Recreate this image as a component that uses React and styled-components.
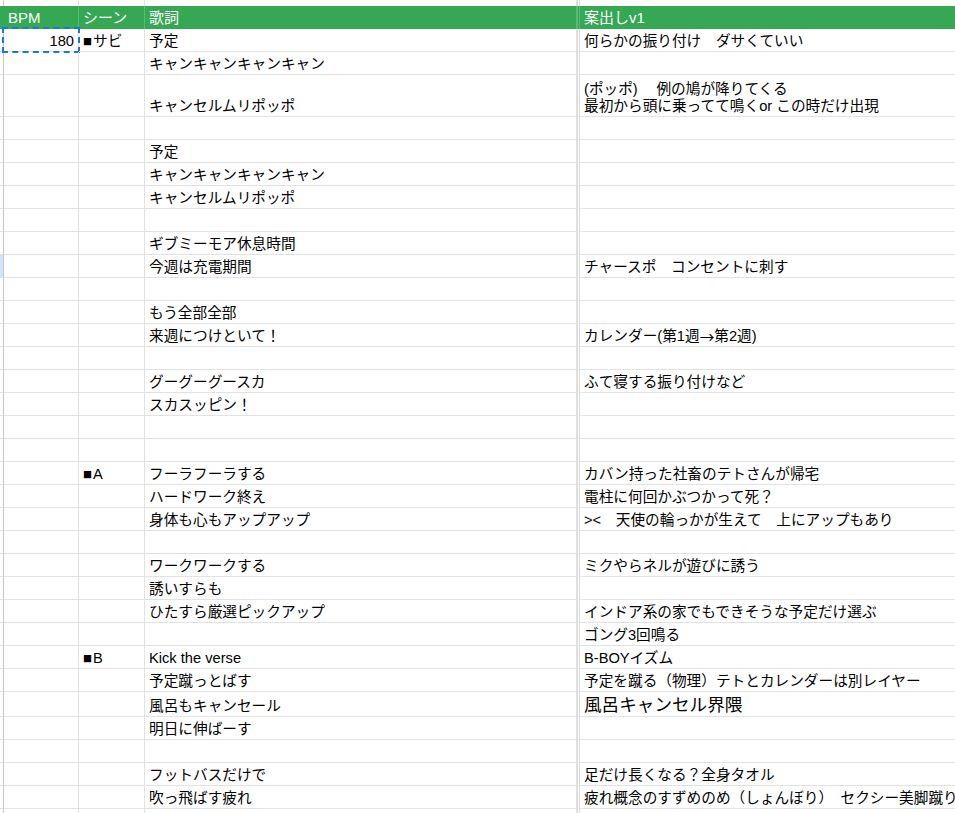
import styled, { createGlobalStyle } from "styled-components";

const GlobalStyle = createGlobalStyle`
  html, body {
    margin: 0;
    padding: 0;
    background: #fff;
    overflow: hidden;
  }
  body {
    font-family: "Liberation Sans", "Noto Sans CJK JP", sans-serif;
    font-size: 14.67px;
    color: #000;
  }
`;

const Cjk = styled.span`
  font-family: "Noto Sans CJK JP", sans-serif;
`;

const rows = [
  { a: "180", b: "サビ", c: "予定", d: "何らかの振り付け　ダサくていい", sel: true },
  { c: "キャンキャンキャンキャン" },
  { c: "キャンセルムリポッポ", d: "(ポッポ)　 例の鳩が降りてくる\n最初から頭に乗ってて鳴くor この時だけ出現", h: 42 },
  {},
  { c: "予定" },
  { c: "キャンキャンキャンキャン" },
  { c: "キャンセルムリポッポ" },
  {},
  { c: "ギブミーモア休息時間" },
  { c: "今週は充電期間", d: "チャースポ　コンセントに刺す", active: true },
  {},
  { c: "もう全部全部" },
  {
    c: "来週につけといて！",
    d: (
      <>
        カレンダー(第1週<Cjk>→</Cjk>第2週)
      </>
    ),
  },
  {},
  { c: "グーグーグースカ", d: "ふて寝する振り付けなど" },
  { c: "スカスッピン！" },
  {},
  {},
  { b: "A", c: "フーラフーラする", d: "カバン持った社畜のテトさんが帰宅" },
  { c: "ハードワーク終え", d: "電柱に何回かぶつかって死？" },
  { c: "身体も心もアップアップ", d: "><　天使の輪っかが生えて　上にアップもあり" },
  {},
  { c: "ワークワークする", d: "ミクやらネルが遊びに誘う" },
  { c: "誘いすらも" },
  { c: "ひたすら厳選ピックアップ", d: "インドア系の家でもできそうな予定だけ選ぶ" },
  { d: "ゴング3回鳴る" },
  { b: "B", c: "Kick the verse", d: "B-BOYイズム" },
  { c: "予定蹴っとばす", d: "予定を蹴る（物理）テトとカレンダーは別レイヤー" },
  { c: "風呂もキャンセール", d: "風呂キャンセル界隈", h: 25, big: true },
  { c: "明日に伸ばーす" },
  {},
  { c: "フットバスだけで", d: "足だけ長くなる？全身タオル" },
  { c: "吹っ飛ばす疲れ", d: "疲れ概念のすずめのめ（しょんぼり）　セクシー美脚蹴り" },
  {},
];

export default function App() {
  return (
    <>
      <GlobalStyle />
      <Sheet>
        <Row $h={6}>
          <RowHead $plain />
          <Spacer />
          <Spacer />
          <Spacer />
          <Spacer $last />
        </Row>
        <HeaderRow>
          <HeadCell $edge />
          <HeadCell>BPM</HeadCell>
          <HeadCell>シーン</HeadCell>
          <HeadCell>歌詞</HeadCell>
          <HeadCell $last>案出しv1</HeadCell>
        </HeaderRow>
        {rows.map((r, i) => (
          <Row key={i} $h={r.h || 23}>
            <RowHead $active={r.active} />
            <Cell $right>
              {r.a}
              {r.sel && <Selection />}
            </Cell>
            <Cell>
              {r.b && (
                <>
                  <Mark>■</Mark>
                  {r.b}
                </>
              )}
            </Cell>
            <Cell>{r.c}</Cell>
            <Cell $last $big={r.big}>
              {r.d}
            </Cell>
          </Row>
        ))}
      </Sheet>
    </>
  );
}

const Sheet = styled.div`
  width: 955px;
  height: 813px;
  overflow: hidden;
`;

const Row = styled.div`
  display: grid;
  grid-template-columns: 4px 75px 66px 432px 440px;
  height: ${(p) => p.$h}px;
`;

const HeaderRow = styled(Row)`
  height: 23px;
  background: #34a853;
`;

const HeadCell = styled.div`
  display: flex;
  align-items: flex-end;
  padding: 0 4px 2px;
  box-sizing: border-box;
  color: #fff;
  font-size: 15px;
  white-space: nowrap;
  line-height: 18px;
  border-right: 1px solid ${(p) => (p.$edge ? "#34a853" : "#5dba76")};
  ${(p) => p.$edge && "padding: 0;"}
  ${(p) => p.$last && "border-left: 3px double #5dba76; border-right: none;"}
`;

const RowHead = styled.div`
  box-sizing: border-box;
  border-right: 1px solid #c4c7c5;
  border-bottom: ${(p) => (p.$plain ? "none" : "1px solid #e2e2e2")};
  background: ${(p) => (p.$active ? "#d3e3fd" : "#fff")};
`;

const Spacer = styled.div`
  border-right: 1px solid #e2e2e2;
  ${(p) => p.$last && "border-left: 3px double #dadada; border-right: none;"}
`;

const Cell = styled.div`
  position: relative;
  display: flex;
  align-items: flex-end;
  justify-content: ${(p) => (p.$right ? "flex-end" : "flex-start")};
  box-sizing: border-box;
  padding: 0 4px 1px;
  border-right: 1px solid #e2e2e2;
  border-bottom: 1px solid #e2e2e2;
  white-space: pre;
  line-height: 17px;
  font-size: ${(p) => (p.$big ? "17.6px" : "14.67px")};
  ${(p) => p.$big && "line-height: 22px; padding-bottom: 0;"}
  ${(p) => p.$last && "border-left: 3px double #dadada; border-right: none; padding-left: 4px;"}
`;

const Mark = styled.span`
  font-family: "Noto Sans CJK JP", sans-serif;
  font-size: 9px;
  margin-right: 1px;
`;

const Selection = styled.div`
  position: absolute;
  left: -2px;
  top: -2px;
  right: -2px;
  bottom: -2px;
  border: 2px dashed #1a73e8;
  pointer-events: none;
`;
